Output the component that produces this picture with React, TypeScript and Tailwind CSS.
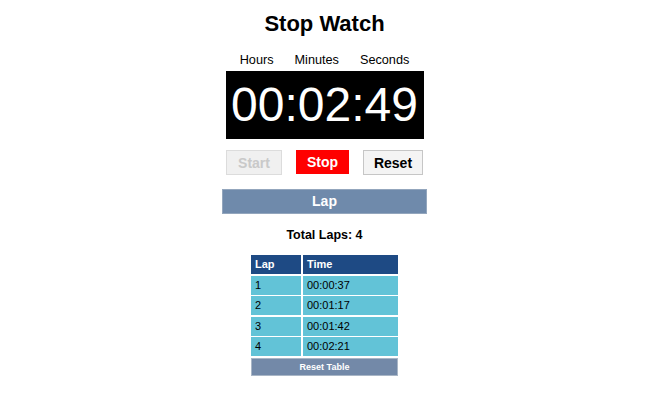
import React from "react";

const laps = [
  { n: 1, t: "00:00:37" },
  { n: 2, t: "00:01:17" },
  { n: 3, t: "00:01:42" },
  { n: 4, t: "00:02:21" },
];

const gaps = ["mt-[2px]", "mt-[1px]", "mt-[2px]", "mt-[1px]"];

export default function App() {
  return (
    <div className="min-h-[420px] w-[660px] bg-white font-['Liberation_Sans',Arial,sans-serif] text-black">
      <div className="flex w-[649px] flex-col items-center">
        <h1 className="mt-[11px] text-[22px] font-bold leading-[26px]">Stop Watch</h1>
        <div className="mt-[15px] flex gap-[21px] text-[12.7px] leading-[16px]">
          <span>Hours</span>
          <span>Minutes</span>
          <span>Seconds</span>
        </div>
        <div className="mt-[3px] flex h-[68px] w-[198px] items-center justify-center bg-black text-[48px] leading-none text-white">
          00:02:49
        </div>
        <div className="mt-[11px] flex items-start gap-[14px] text-[14px] font-bold leading-[16px]">
          <button className="h-[25px] w-[56px] border border-[#dcdcdc] bg-[#f0f0f0] text-[#c9c9c9]">Start</button>
          <button className="h-[24px] w-[53px] bg-[#ff0000] text-white">Stop</button>
          <button className="h-[25px] w-[60px] border border-[#c6c6c6] bg-[#f4f4f4] text-black">Reset</button>
        </div>
        <div className="mt-[14px] flex h-[25px] w-[205px] items-center justify-center border border-[#93a6bd] bg-[#6f8aab] text-[14px] font-bold text-white">
          Lap
        </div>
        <div className="mt-[13px] text-[12.5px] font-bold leading-[16px]">Total Laps: 4</div>
        <div className="mt-[12px] flex w-[147px] flex-col text-[11px] leading-none">
          <div className="flex h-[19px] gap-[2px] font-bold text-white">
            <div className="flex w-[50px] items-center bg-[#1e4a84] pl-[4px]">Lap</div>
            <div className="flex flex-1 items-center bg-[#1e4a84] pl-[4px]">Time</div>
          </div>
          {laps.map((l, i) => (
            <div key={l.n} className={`flex h-[19px] gap-[2px] ${gaps[i]}`}>
              <div className="flex w-[50px] items-center bg-[#62c3d7] pl-[4px]">{l.n}</div>
              <div className="flex flex-1 items-center bg-[#62c3d7] pl-[4px]">{l.t}</div>
            </div>
          ))}
          <div className="mt-[2px] flex h-[18px] items-center justify-center border border-[#a9b6c6] bg-[#7389a8] text-[9px] font-bold text-white">
            Reset Table
          </div>
        </div>
      </div>
    </div>
  );
}
